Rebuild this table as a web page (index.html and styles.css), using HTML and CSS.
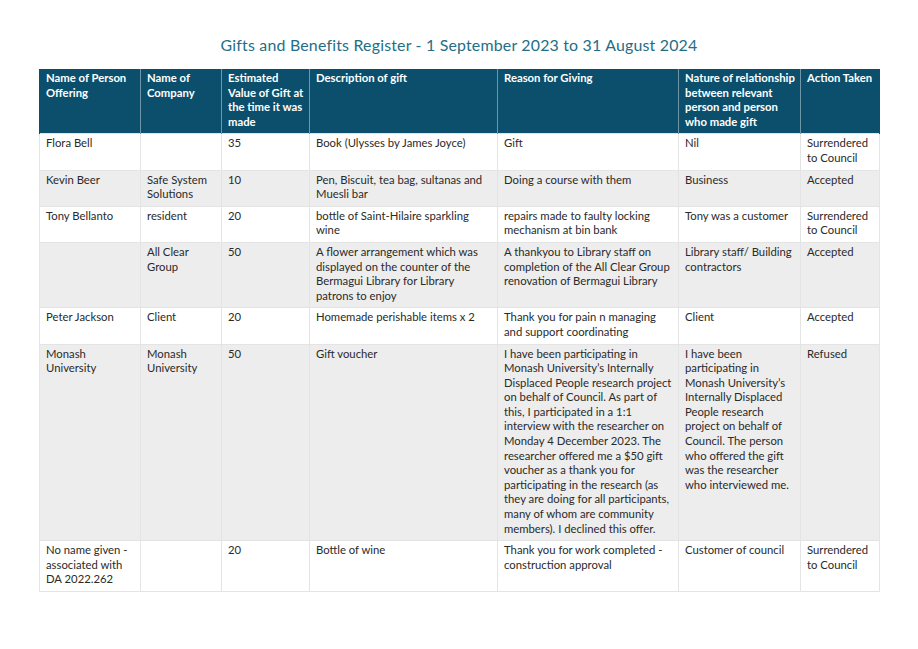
FILE: index.html
```html
<!DOCTYPE html>
<html lang="en">
<head>
<meta charset="utf-8">
<title>Gifts and Benefits Register</title>
<link rel="stylesheet" href="styles.css">
</head>
<body>
<h1 class="title">Gifts and Benefits Register - 1 September 2023 to 31 August 2024</h1>
<table class="register">
  <colgroup>
    <col class="c1"><col class="c2"><col class="c3"><col class="c4"><col class="c5"><col class="c6"><col class="c7">
  </colgroup>
  <thead>
    <tr>
      <th>Name of Person Offering</th>
      <th>Name of Company</th>
      <th>Estimated Value of Gift at the time it was made</th>
      <th>Description of gift</th>
      <th>Reason for Giving</th>
      <th>Nature of relationship between relevant person and person who made gift</th>
      <th>Action Taken</th>
    </tr>
  </thead>
  <tbody>
    <tr>
      <td>Flora Bell</td><td></td><td>35</td><td>Book (Ulysses by James Joyce)</td><td>Gift</td><td>Nil</td><td>Surrendered to Council</td>
    </tr>
    <tr>
      <td>Kevin Beer</td><td>Safe System Solutions</td><td>10</td><td>Pen, Biscuit, tea bag, sultanas and Muesli bar</td><td>Doing a course with them</td><td>Business</td><td>Accepted</td>
    </tr>
    <tr>
      <td>Tony Bellanto</td><td>resident</td><td>20</td><td>bottle of Saint-Hilaire sparkling wine</td><td>repairs made to faulty locking mechanism at bin bank</td><td>Tony was a customer</td><td>Surrendered to Council</td>
    </tr>
    <tr>
      <td></td><td>All Clear Group</td><td>50</td><td>A flower arrangement which was displayed on the counter of the Bermagui Library for Library patrons to enjoy</td><td>A thankyou to Library staff on completion of the All Clear Group renovation of Bermagui Library</td><td>Library staff/ Building contractors</td><td>Accepted</td>
    </tr>
    <tr>
      <td>Peter Jackson</td><td>Client</td><td>20</td><td>Homemade perishable items x 2</td><td>Thank you for pain n managing and support coordinating</td><td>Client</td><td>Accepted</td>
    </tr>
    <tr>
      <td>Monash University</td><td>Monash University</td><td>50</td><td>Gift voucher</td><td>I have been participating in Monash University’s Internally Displaced People research project on behalf of Council. As part of this, I participated in a 1:1 interview with the researcher on Monday 4 December 2023. The researcher offered me a $50 gift voucher as a thank you for participating in the research (as they are doing for all participants, many of whom are community members). I declined this offer.</td><td>I have been participating in Monash University’s Internally Displaced People research project on behalf of Council. The person who offered the gift was the researcher who interviewed me.</td><td>Refused</td>
    </tr>
    <tr>
      <td>No name given - associated with DA 2022.262</td><td></td><td>20</td><td>Bottle of wine</td><td>Thank you for work completed - construction approval</td><td>Customer of council</td><td>Surrendered to Council</td>
    </tr>
  </tbody>
</table>
</body>
</html>
```
FILE: styles.css
```css
html, body {
  margin: 0;
  padding: 0;
  background: #ffffff;
}
body {
  padding: 35px 39px 20px 39px;
  font-family: "Lato", "Liberation Sans", sans-serif;
  color: #222;
}
.title {
  margin: 0 0 14px 0;
  text-align: center;
  font-family: "Lato", "Liberation Sans", sans-serif;
  font-weight: 400;
  font-size: 15.9px;
  line-height: 20px;
  color: #236e86;
  letter-spacing: 0.2px;
}
.register {
  width: 840px;
  border-collapse: collapse;
  table-layout: fixed;
  font-size: 11.3px;
  line-height: 14.6px;
}
.c1 { width: 101px; }
.c2 { width: 81px; }
.c3 { width: 88px; }
.c4 { width: 188px; }
.c5 { width: 181px; }
.c6 { width: 122px; }
.c7 { width: 79px; }
.register th,
.register td {
  text-align: left;
  vertical-align: top;
  padding: 2px 5px 4px 6px;
}
.register th {
  background: #0b4f6c;
  color: #ffffff;
  font-weight: 700;
  border-left: 1px solid #6f97a8;
  border-right: 1px solid #6f97a8;
}
.register th:first-child { border-left-color: #0b4f6c; }
.register th:last-child { border-right-color: #0b4f6c; }
.register td {
  border: 1px solid #e4e4e4;
  color: #2a2a2a;
}
.register tbody tr:nth-child(even) td {
  background: #ededed;
}
```
